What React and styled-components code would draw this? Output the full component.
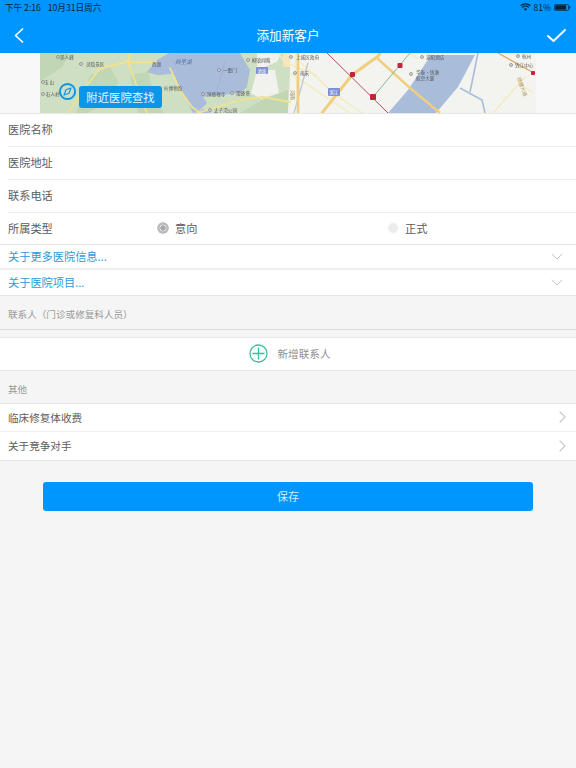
import React from 'react';
import styled, { createGlobalStyle } from 'styled-components';

const Global = createGlobalStyle`
  html, body { margin: 0; padding: 0; background: #f5f5f5; }
  body { font-family: "Noto Sans CJK SC", "Noto Sans", sans-serif; }
  * { box-sizing: border-box; }
`;

const Page = styled.div`
  width: 576px;
  min-height: 768px;
  overflow: hidden;
  background: #f5f5f5;
  color: #555;
`;
const Header = styled.header`
  background: #0096ff;
  height: 53px;
`;
const StatusBar = styled.div`
  height: 14px;
  padding: 0 5px;
  display: flex;
  align-items: center;
  justify-content: space-between;
  font-size: 8.6px;
  line-height: 14px;
  color: #0b2233;
`;
const StatusGroup = styled.div`
  display: flex;
  align-items: center;
  gap: ${p => p.$gap || 3}px;
`;
const NavBar = styled.div`
  height: 39px;
  padding: 3px 10px 0;
  display: grid;
  grid-template-columns: 1fr auto 1fr;
  align-items: center;
`;
const NavEnd = styled.div`
  display: flex;
  justify-content: ${p => (p.$right ? 'flex-end' : 'flex-start')};
  padding-left: ${p => (p.$right ? 0 : 4)}px;
`;
const Title = styled.h1`
  margin: 0 0 2px;
  font-size: 12.6px;
  font-weight: 400;
  color: #fff;
`;
const MapSection = styled.section`
  height: 60px;
  padding: 0 40px;
  background: #f8f8f8;
`;
const MapFrame = styled.div`
  position: relative;
  width: 496px;
  height: 60px;
  overflow: hidden;
`;
const MapArt = styled.svg`
  display: block;
  filter: blur(0.45px);
`;
const NearbyControl = styled.div`
  position: absolute;
  left: 18px;
  top: 29px;
  display: flex;
  align-items: flex-start;
  gap: 2px;
`;
const NearbyButton = styled.button`
  width: 83px;
  height: 22px;
  margin-top: 4px;
  padding: 0;
  border: 0;
  border-radius: 3px;
  background: #0c96ea;
  color: #e8f5ff;
  font: 400 11.3px "Noto Sans CJK SC", sans-serif;
  letter-spacing: 0.1px;
`;
const Card = styled.div`
  background: #fff;
  border-top: ${p => (p.$top ? '1px solid #e6e6e6' : '0')};
  border-bottom: 1px solid #e6e6e6;
`;
const FieldRow = styled.div`
  height: ${p => p.$h || 33}px;
  margin-left: 8px;
  padding-bottom: 2px;
  display: flex;
  align-items: center;
  font-size: 11.2px;
  color: #5c5c5c;
  border-bottom: ${p => (p.$last ? '0' : '1px solid #ededed')};
`;
const TypeLabel = styled.span`
  flex: 0 0 149px;
`;
const RadioOption = styled.label`
  flex: ${p => (p.$fill ? '1 1 0' : '0 0 230px')};
  display: flex;
  align-items: center;
  gap: 6px;
`;
const Radio = styled.span`
  width: 12px;
  height: 12px;
  border-radius: 50%;
  background: ${p =>
    p.$checked
      ? 'radial-gradient(circle, #a8a8a8 0 2.4px, #e8e8e8 2.9px, #b8b8b8 3.8px, #bdbdbd 5.4px, #ddd 6px)'
      : 'radial-gradient(circle, #ececec 0 4px, #f6f6f6 5px, #fff 6px)'};
`;
const LinkRow = styled.div`
  height: ${p => p.$h}px;
  padding: 0 13px 1px 8px;
  display: flex;
  align-items: center;
  justify-content: space-between;
  background: #fff;
  font-size: 11.2px;
  color: #2d9ad8;
  border-bottom: ${p => p.$line};
`;
const SectionLabel = styled.div`
  height: ${p => p.$h}px;
  padding: ${p => p.$pad}px 8px 0;
  font-size: 9.6px;
  line-height: 14px;
  color: #999;
`;
const Spacer = styled.div`
  height: 8px;
  border-top: 1px solid #dedede;
`;
const AddRow = styled.div`
  height: 32px;
  padding: 0 0 2px 3px;
  display: flex;
  align-items: center;
  justify-content: center;
  gap: 10px;
  font-size: 10.6px;
  color: #8f8f8f;
`;
const NavRow = styled.div`
  height: 28px;
  padding: 0 10px 1px 8px;
  display: flex;
  align-items: center;
  justify-content: space-between;
  font-size: 10.6px;
  color: #5c5c5c;
  border-bottom: ${p => (p.$last ? '0' : '1.5px solid #f0f0f0')};
`;
const SaveBar = styled.div`
  padding: 21px 43px 0 43px;
`;
const SaveButton = styled.button`
  display: block;
  width: 490px;
  height: 29px;
  padding: 0 0 2px;
  border: 0;
  border-radius: 3px;
  background: #0096ff;
  color: #d5ecff;
  font: 400 11px "Noto Sans CJK SC", sans-serif;
`;

const Chevron = ({ d, w, h, color, sw = 1 }) => (
  <svg width={w} height={h} viewBox={`0 0 ${w} ${h}`} fill="none">
    <path d={d} stroke={color} strokeWidth={sw} strokeLinecap="round" strokeLinejoin="round" />
  </svg>
);
const DownIcon = () => <Chevron w={12} h={7} d="M1 1l5 5 5-5" color="#c8c8c8" />;
const RightIcon = () => <Chevron w={7} h={12} d="M1 1l5 5-5 5" color="#c8c8c8" sw={1.1} />;

const labels = [
  [60, 59, '美人峰'], [86, 66, '灵隐景区'], [152, 66, '西湖'], [44, 84, '玉 山'], [46, 96, '石人岭'],
  [164, 90, '叶博物馆'], [223, 72, '一重门'], [207, 96, '净慈禅寺'], [236, 95, '雷峰塔'],
  [214, 112, '太子湾公园'], [252, 62, '柳浪闻莺'], [296, 59, '上城区政府'], [300, 75, '南宋'],
  [426, 59, '浦阳酒店'], [416, 74, '华泰·钱塘'], [416, 80, '航空大厦'], [522, 58, '杭州'], [515, 67, '钱江中心']
];
const pois = [[58, 57], [81, 64], [43, 82], [43, 94], [219, 70], [203, 94], [232, 93], [210, 110], [248, 60], [291, 57], [295, 73], [422, 57], [411, 74], [518, 56], [511, 65]];

const MapDrawing = () => (
  <MapArt width="496" height="60" viewBox="40 53 496 60">
    <rect x="40" y="53" width="496" height="60" fill="#f3f3ef" />
    <path d="M40 53h250v20l-2 40H40z" fill="#cfdfc4" />
    <path d="M40 53h30l-8 14-12 8-10 6zM90 75l20-8 8 14-6 18-24 14h-12l8-20zM130 75l18-3 6 22 10 19h-26zM262 100l26-10v23h-48z" fill="#c0d6b4" />
    <path d="M257 70l20-8 4-9h-24zM257 70h18l4 23-18 6-10-6z" fill="#f1f1ed" />
    <path d="M283 53h7v14h-7z" fill="#f3e6bd" />
    <path d="M157 60l12-7h71l10 17-3 17-7 6-37 4 4 6-9 9-5 1-13-26-7-13-16 1-10-3z" fill="#a9bddb" />
    <path d="M198 113l5-4 8 4z" fill="#a9bddb" />
    <g fill="none" strokeLinecap="round" strokeLinejoin="round">
      <path d="M130 53l-2 9 9 25 10 26M128 62l-28 6-15 20-17 25M128 62h28M170 68l10 22 12 17 8 6M198 113l42-13 23-3 27 5" stroke="#f2e28e" strokeWidth="1.8" />
      <path d="M225 62l-8 28" stroke="#8ea7c9" strokeWidth=".5" />
      <path d="M295 53l3 60M278 53l8 10 30 12M290 73l60 40M300 62l32 30 30 21" stroke="#f3ecbb" strokeWidth="1.4" />
      <path d="M308 63l-14 50" stroke="#b9c4dc" strokeWidth="1.2" />
      <path d="M298 53v60" stroke="#efcf7e" strokeWidth="2.6" />
      <path d="M322 113l30-38 25-18M377 58l3-5" stroke="#efcf7e" strokeWidth="3" />
    </g>
    <path d="M431 55h44l-17 32-22 26h-48l20-23z" fill="#a9bddb" />
    <path d="M377 58l33 30 30 25" fill="none" stroke="#efcf7e" strokeWidth="2.4" />
    <path d="M478 53l-8 39M460 88l22 12 3 13" fill="none" stroke="#a9bddb" strokeWidth="1.6" />
    <path d="M525 77l-32 36M519 83l14 10M410 53l8 6" fill="none" stroke="#f3ecbb" strokeWidth="1.4" />
    <path d="M498 53l36 20" stroke="#e0a75f" strokeWidth="1.2" />
    <path d="M327 53l61 60" stroke="#b33a4c" strokeWidth=".9" />
    <path d="M373 97l37-44" stroke="#6cab78" strokeWidth=".8" />
    <g fill="#c9203d">
      <rect x="350" y="72" width="5" height="5" rx="1" />
      <rect x="370" y="94" width="6" height="6" rx="1" />
      <rect x="397.5" y="63" width="5" height="5" rx="1" />
      <rect x="531" y="71" width="4" height="4" rx="1" />
    </g>
    <rect x="328" y="88" width="12" height="8" rx="1" fill="#7d8fd8" />
    <text x="329.5" y="94" fontSize="4.5" fill="#fff">滨江</text>
    <rect x="256" y="67" width="12" height="7" rx="1" fill="#7d8fd8" />
    <text x="257.5" y="72.6" fontSize="4.5" fill="#fff">清波</text>
    <text x="175" y="64" fontSize="5.5" fill="#4f6fa8" fontStyle="italic">西里湖</text>
    <text transform="translate(517 78) rotate(70)" fontSize="5" fill="#a6925a">钱塘大道</text>
    <text transform="translate(291 90) rotate(90)" fontSize="5" fill="#a6925a">河南</text>
    <g fill="#dcdcdc" stroke="#555" strokeWidth=".5">
      {pois.map(([x, y]) => <circle key={`${x}-${y}`} cx={x} cy={y} r="1.5" />)}
    </g>
    <g fontSize="4.6" fill="#555">
      {labels.map(([x, y, t]) => <text key={t} x={x} y={y}>{t}</text>)}
    </g>
  </MapArt>
);

const Compass = () => (
  <svg width="19" height="19" viewBox="0 0 19 19" fill="none">
    <circle cx="9.5" cy="9.5" r="7.6" stroke="#0e96e2" strokeWidth="2" />
    <path d="M13 6l-5 1.8L6 13l5-1.8z" stroke="#0e96e2" strokeWidth="1.2" strokeLinejoin="round" />
  </svg>
);

const Wifi = () => (
  <svg width="11" height="8" viewBox="0 0 11 8" fill="none" stroke="#0b2233" strokeWidth="1.2">
    <path d="M.6 2.8a7 7 0 0 1 9.8 0" />
    <path d="M2.3 4.5a4.6 4.6 0 0 1 6.4 0" />
    <path d="M5.5 7.8L3.9 6.1a2.3 2.3 0 0 1 3.2 0z" fill="#0b2233" stroke="none" />
  </svg>
);

export default function App() {
  return (
    <Page>
      <Global />
      <Header>
        <StatusBar>
          <StatusGroup $gap={7}><span>下午 2:16</span><span>10月31日周六</span></StatusGroup>
          <StatusGroup>
            <Wifi />
            <span>81%</span>
            <svg width="17" height="7" viewBox="0 0 17 7">
              <rect x=".4" y=".4" width="14.2" height="6.2" rx="1.6" fill="none" stroke="#0b2233" strokeWidth=".7" />
              <rect x="1.2" y="1.2" width="11" height="4.6" rx=".8" fill="#0b2233" />
              <rect x="15.2" y="2.4" width="1.2" height="2.2" rx=".5" fill="#0b2233" />
            </svg>
          </StatusGroup>
        </StatusBar>
        <NavBar>
          <NavEnd><Chevron w={10} h={15} d="M8.5 1L1.5 7.5l7 6.5" color="#fff" sw={1.7} /></NavEnd>
          <Title>添加新客户</Title>
          <NavEnd $right><Chevron w={19} h={13} d="M1 7l5.5 5L18 1" color="#fff" sw={1.9} /></NavEnd>
        </NavBar>
      </Header>

      <MapSection>
        <MapFrame>
          <MapDrawing />
          <NearbyControl>
            <Compass />
            <NearbyButton>附近医院查找</NearbyButton>
          </NearbyControl>
        </MapFrame>
      </MapSection>

      <Card $top>
        <FieldRow>医院名称</FieldRow>
        <FieldRow>医院地址</FieldRow>
        <FieldRow>联系电话</FieldRow>
        <FieldRow $last $h={31}>
          <TypeLabel>所属类型</TypeLabel>
          <RadioOption><Radio $checked />意向</RadioOption>
          <RadioOption $fill><Radio />正式</RadioOption>
        </FieldRow>
      </Card>
      <LinkRow $h={25} $line="2px solid #f0f0f0">关于更多医院信息...<DownIcon /></LinkRow>
      <LinkRow $h={26} $line="1px solid #e6e6e6">关于医院项目...<DownIcon /></LinkRow>

      <SectionLabel $h={33} $pad={11}>联系人（门诊或修复科人员）</SectionLabel>
      <Spacer />
      <Card $top>
        <AddRow>
          <svg width="19" height="19" viewBox="0 0 19 19" fill="none" stroke="#3dbda0">
            <circle cx="9.5" cy="9.5" r="8.5" strokeWidth="1.3" />
            <path d="M9.5 3.5v12M3.5 9.5h12" strokeWidth="1.3" />
          </svg>
          新增联系人
        </AddRow>
      </Card>

      <SectionLabel $h={32} $pad={11}>其他</SectionLabel>
      <Card $top>
        <NavRow>临床修复体收费<RightIcon /></NavRow>
        <NavRow $last>关于竞争对手<RightIcon /></NavRow>
      </Card>

      <SaveBar><SaveButton>保存</SaveButton></SaveBar>
    </Page>
  );
}
